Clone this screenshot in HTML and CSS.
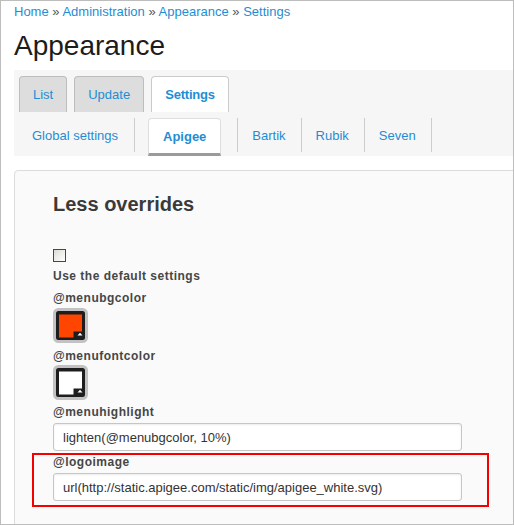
FILE: index.html
```html
<!DOCTYPE html>
<html>
<head>
<meta charset="utf-8">
<link rel="stylesheet" href="styles.css">
</head>
<body>
<div class="page">
  <nav class="breadcrumb"><a href="#">Home</a> » <a href="#">Administration</a> » <a href="#">Appearance</a> » <a href="#">Settings</a></nav>
  <h1 class="title">Appearance</h1>
  <div class="tabs">
    <ul class="primary">
      <li><a href="#">List</a></li>
      <li><a href="#">Update</a></li>
      <li class="active"><a href="#">Settings</a></li>
    </ul>
    <ul class="secondary">
      <li class="first"><a href="#">Global settings</a></li>
      <li class="active"><a href="#">Apigee</a></li>
      <li><a href="#">Bartik</a></li>
      <li><a href="#">Rubik</a></li>
      <li><a href="#">Seven</a></li>
    </ul>
  </div>
  <div class="panel">
    <h2 class="panel-title">Less overrides</h2>
    <div class="item item-check">
      <input type="checkbox" class="check">
      <label class="label label-check">Use the default settings</label>
    </div>
    <div class="item item-swatch1">
      <label class="label">@menubgcolor</label>
      <svg class="swatch" width="35" height="35" viewBox="0 0 35 35">
        <rect x="1.5" y="1.5" width="32" height="32" rx="4" fill="#1e1e1e" stroke="#c2c2c2" stroke-width="3"/>
        <path d="M6 6.5H29V23.5H20.5V29.5H6Z" fill="#ff4500"/>
        <path d="M24.5 27.5L27 24.8L29.5 27.5Z" fill="#fff"/>
      </svg>
    </div>
    <div class="item item-swatch2">
      <label class="label">@menufontcolor</label>
      <svg class="swatch" width="35" height="35" viewBox="0 0 35 35">
        <rect x="1.5" y="1.5" width="32" height="32" rx="4" fill="#1e1e1e" stroke="#c2c2c2" stroke-width="3"/>
        <path d="M6 6.5H29V23.5H20.5V29.5H6Z" fill="#ffffff"/>
        <path d="M24.5 27.5L27 24.8L29.5 27.5Z" fill="#fff"/>
      </svg>
    </div>
    <div class="item item-text1">
      <label class="label">@menuhighlight</label>
      <input type="text" class="field" value="lighten(@menubgcolor, 10%)">
    </div>
    <div class="item item-text2">
      <span class="highlight"></span>
      <label class="label">@logoimage</label>
      <input type="text" class="field" value="url(http://static.apigee.com/static/img/apigee_white.svg)">
    </div>
  </div>
</div>
</body>
</html>
```
FILE: styles.css
```css
html, body {
  margin: 0;
  padding: 0;
  background: #fff;
}
body {
  font-family: "Liberation Sans", Arial, sans-serif;
  font-size: 13px;
  color: #333;
}
a {
  color: #1f8dd3;
  text-decoration: none;
}
.page {
  box-sizing: border-box;
  width: 514px;
  height: 525px;
  border: 1px solid #bdbdbd;
  overflow: hidden;
  padding-left: 13px;
}
.breadcrumb {
  padding-top: 3px;
  line-height: 16px;
  font-size: 13px;
  color: #555;
}
.title {
  margin: 10px 0 0;
  font-size: 28px;
  line-height: 32px;
  font-weight: normal;
  color: #1c1c1c;
}
.tabs {
  margin-top: 8px;
  background: #f6f6f6;
}
.primary,
.secondary {
  list-style: none;
  margin: 0;
  display: flex;
}
.primary {
  padding: 6px 0 0 5px;
  gap: 7px;
}
.primary a {
  display: block;
  box-sizing: border-box;
  height: 36px;
  line-height: 35px;
  padding: 0 13px;
  border: 1px solid #bdbdbd;
  border-bottom: 0;
  border-radius: 4px 4px 0 0;
  background: #dddddd;
}
.primary .active a {
  background: #fff;
  border-color: #cbcbcb;
  font-weight: bold;
  padding: 0 13px;
  letter-spacing: -0.2px;
}
.secondary {
  padding: 0 0 0 4px;
}
.secondary li {
  height: 34px;
  margin: 6px 0 4px;
  padding: 0 15px 0 14px;
  border-right: 1px solid #cccccc;
}
.secondary .first {
  padding-right: 16px;
}
.secondary a {
  display: block;
  height: 34px;
  line-height: 36px;
}
.secondary .active {
  padding-left: 13px;
  padding-right: 16px;
}
.secondary .active a {
  box-sizing: border-box;
  height: 38px;
  line-height: 35px;
  padding: 0 14px;
  background: #fff;
  border: 1px solid #dedede;
  border-bottom: 3px solid #9b9b9b;
  border-radius: 4px 4px 0 0;
  font-weight: bold;
}
.panel {
  margin: 14px -10px 0 0;
  height: 400px;
  border: 1px solid #dcdcdc;
  border-radius: 4px 4px 0 0;
  background: #fafafa;
  padding: 21px 0 0 38px;
}
.panel-title {
  margin: 0;
  font-size: 20px;
  line-height: 24px;
  font-weight: bold;
  color: #3a3a3a;
}
.item {
  display: flex;
  flex-direction: column;
  align-items: flex-start;
}
.label {
  display: block;
  font-size: 12px;
  line-height: 18px;
  font-weight: bold;
  letter-spacing: 0.5px;
  color: #464646;
}
.item-check {
  margin-top: 33px;
}
.check {
  appearance: none;
  -webkit-appearance: none;
  display: block;
  margin: 0;
  width: 13px;
  height: 13px;
  box-sizing: border-box;
  border: 1px solid #1c5180;
  background: linear-gradient(135deg, #dcdcd6, #ffffff);
}
.label-check {
  margin-top: 5px;
}
.item-swatch1 {
  margin-top: 4px;
}
.item-swatch2 {
  margin-top: 4px;
}
.swatch {
  display: block;
  margin-top: 1px;
}
.item-swatch2 .swatch {
  margin-top: 0;
}
.item-text1 {
  margin-top: 3px;
}
.item-text2 {
  margin-top: 2px;
  position: relative;
}
.field {
  box-sizing: border-box;
  width: 409px;
  height: 28px;
  margin: 2px 0 0;
  padding: 0 9px;
  border: 1px solid #c6c6c6;
  border-radius: 3px;
  background: #fff;
  box-shadow: inset 0 1px 2px rgba(0, 0, 0, 0.08);
  font-family: "Liberation Sans", Arial, sans-serif;
  font-size: 13px;
  color: #333;
}
.highlight {
  position: absolute;
  left: -21px;
  top: 0;
  width: 457px;
  height: 54px;
  box-sizing: border-box;
  border: 2px solid #f40000;
}
```
